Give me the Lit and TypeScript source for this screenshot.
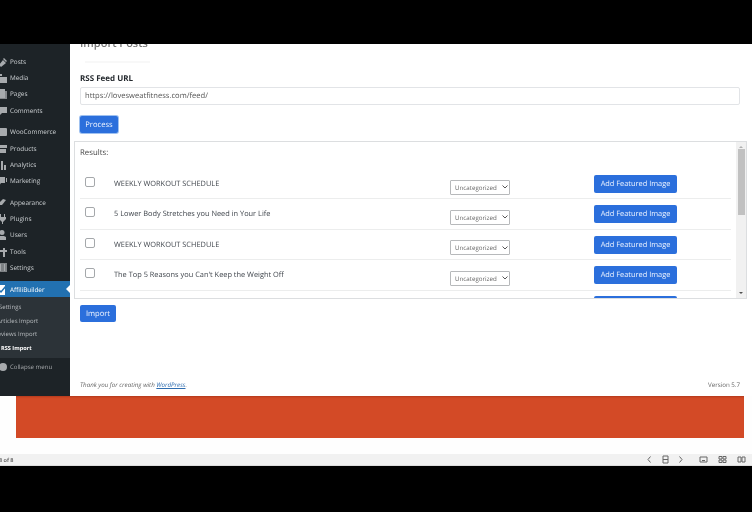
import { LitElement, html, css, svg } from "lit";
import { customElement } from "lit/decorators.js";

const icons: Record<string, unknown> = {
  posts: svg`<path d="M2 9l4-5 3 3-5 4zM6 3l3 3 1-1-3-3z"/>`,
  media: svg`<path d="M0 2h5v2H2v3H0zM3 5h7v6H3z"/>`,
  pages: svg`<path d="M1 1h7v9H1z"/><path d="M3 3h7v8H3z" opacity=".75"/>`,
  comments: svg`<path d="M1 2h9v6H5l-3 3V8H1z"/>`,
  woo: svg`<rect x="0" y="2" width="10" height="8" rx="1"/>`,
  products: svg`<path d="M0 2h10v3H0zM1 6h8v4H1z"/>`,
  analytics: svg`<path d="M1 5h2v6H1zM4 2h2v9H4zM7 6h2v5H7z"/>`,
  marketing: svg`<path d="M1 2h7v6H4l-2 3V8H1zM9 3h1v4H9z"/>`,
  appearance: svg`<path d="M1 7l5-5 3 1-4 5H2z"/>`,
  plugins: svg`<path d="M3 1h1v3H3zM7 1h1v3H7zM2 4h7v2L6 9v2H5V9L2 6z"/>`,
  users: svg`<circle cx="5" cy="3.5" r="2.500"/><path d="M1 11V8l2-1h4l2 1v3z"/>`,
  tools: svg`<path d="M1 4h5V2h2v2h2v2H8v5H6V6H1z"/>`,
  settings: svg`<path d="M1 1h9v9H1z" fill-opacity=".7"/><path d="M3 2h1v7H3zM7 2h1v7H7z"/>`,
  affili: svg`<path d="M0 1h8v10H0z"/><path d="M2 6l2 2 5-6" fill="none" stroke="#2271b1" stroke-width="1.5"/>`,
};

const menu = [
  [["Posts", "posts"], ["Media", "media"], ["Pages", "pages"], ["Comments", "comments"]],
  [["WooCommerce", "woo"], ["Products", "products"], ["Analytics", "analytics"], ["Marketing", "marketing"]],
  [["Appearance", "appearance"], ["Plugins", "plugins"], ["Users", "users"], ["Tools", "tools"], ["Settings", "settings"]],
];

const rows = [
  "WEEKLY WORKOUT SCHEDULE",
  "5 Lower Body Stretches you Need in Your Life",
  "WEEKLY WORKOUT SCHEDULE",
  "The Top 5 Reasons you Can't Keep the Weight Off",
  "",
];

@customElement("app-root")
export class AppRoot extends LitElement {
  static styles = css`
    :host { display: block; width: 752px; height: 512px; overflow: hidden; background: #000; font-family: "Open Sans", "Noto Sans", sans-serif; color: #333; text-rendering: geometricPrecision; filter: blur(.35px); }
    .band { height: 44px; background: #000; }
    .wp { display: flex; height: 352px; background: #fff; }
    .side { width: 70px; flex: none; background: #1d2327; color: #ccd0d3; font-size: 6.4px; overflow: hidden; padding-top: 9px; box-sizing: border-box; }
    .group { margin-bottom: 5.4px; }
    .item { height: 16.3px; display: flex; align-items: center; gap: 2px; margin-left: -3px; white-space: nowrap; }
    .item svg { width: 11px; height: 11px; fill: #a7aaad; flex: none; }
    .active { height: 16px; background: #2271b1; color: #fff; position: relative; margin-left: 0; padding-left: 0; }
    .active svg { fill: #fff; margin-left: -3px; }
    .active::after { content: ""; position: absolute; right: 0; top: 4px; border: 4px solid transparent; border-right-color: #fff; border-left-width: 0; }
    .sub { background: #2c3338; height: 61px; padding-top: 4px; box-sizing: border-box; color: #b8bcbf; overflow: hidden; font-size: 6px; }
    .sub div { height: 13.6px; line-height: 13.6px; white-space: nowrap; }
    .sub .cur { color: #fff; font-weight: 700; font-size: 5.6px; }
    .collapse { height: 17px; display: flex; align-items: center; gap: 3px; color: #a7aaad; white-space: nowrap; font-size: 6.100px; }
    .dot { width: 8px; height: 8px; background: #a7aaad; border-radius: 50%; margin-left: -1px; flex: none; }
    .main { flex: 1; min-width: 0; display: flex; flex-direction: column; position: relative; overflow: hidden; }
    .title { height: 17px; padding: 0 0 0 10px; font-size: 11px; font-weight: 600; color: #777; line-height: 0; }
    .rule { height: 2px; width: 65px; margin-left: 15px; background: #f8f8f8; }
    label { display: block; font-size: 8px; font-weight: 700; color: #23282d; margin: 10px 0 0 10px; line-height: 11px; }
    .input { margin: 3px 12px 0 10px; height: 18px; border: 1px solid #e2e4e7; border-radius: 2px; box-sizing: border-box; font-size: 7.6px; line-height: 16px; padding-left: 4px; color: #555; }
    .btn { background: #2b6fdc; color: #eef4ff; border-radius: 2px; font-size: 7.6px; display: flex; align-items: center; justify-content: center; box-sizing: border-box; }
    .process { width: 38px; height: 17px; margin: 11px 0 0 10px; box-shadow: 0 0 0 1px #9fc1f0; }
    .box { margin: 8px 5px 0 4px; height: 158px; border: 1px solid #dcdee0; display: flex; box-sizing: border-box; overflow: hidden; }
    .list { flex: 1; min-width: 0; padding: 0 0 0 5px; }
    .results { font-size: 7.8px; height: 27px; padding-top: 6px; box-sizing: border-box; line-height: 11px; color: #444; }
    .row { height: 30.4px; display: grid; grid-template-columns: 34px 336px 144px 1fr; border-bottom: 1px solid #eceded; box-sizing: border-box; position: relative; margin-right: 5px; font-size: 7.4px; color: #40464d; }
    .row:last-child { border: 0; }
    .row:last-child .add { margin-top: 5.4px; }
    .check { width: 8px; height: 8px; border: 1px solid #a5a8ab; border-radius: 2px; margin: 8px 0 0 5px; background: #fff; box-sizing: content-box; }
    .name { padding-top: 10px; line-height: 11px; white-space: nowrap; }
    .sel { width: 60px; height: 15px; margin-top: 10.5px; border: 1px solid #b7b9bb; border-radius: 1px; box-sizing: border-box; font-size: 6.2px; line-height: 13px; padding-left: 4px; color: #666; display: flex; align-items: center; gap: 5px; }
    .sel svg { width: 6px; height: 4px; fill: none; stroke: #555; }
    .add { width: 83px; height: 18px; margin-top: 6px; font-size: 7.4px; }
    .add span { display: block; }
    .bar { width: 10px; flex: none; background: #f1f1f1; display: flex; flex-direction: column; align-items: center; justify-content: space-between; padding: 4px 0; box-sizing: border-box; }
    .thumb { width: 7px; height: 66px; background: #c1c1c1; margin-top: 1px; }
    .spacer { flex: 1; }
    .up, .down { width: 0; height: 0; border: 2px solid transparent; }
    .up { border-bottom-color: #b0b0b0; border-top-width: 0; }
    .down { border-top-color: #505050; border-bottom-width: 0; }
    .import { width: 36px; height: 17px; margin: 6px 0 0 10px; }
    .foot { margin-top: auto; height: 16px; display: flex; justify-content: space-between; padding: 0 12px 0 10px; font-size: 6.2px; color: #666; line-height: 10px; }
    .foot i a { color: #2f6db0; text-decoration: underline; }
    .slide { height: 58px; background: #fefefe; padding: 0 8px 0 16px; }
    .orange { height: 42px; background: #d34a26; box-shadow: inset 0 2px 2px -1px #b23a1c; }
    .status { height: 12px; background: #f1f1f1; display: flex; align-items: center; font-size: 5.5px; font-weight: 600; color: #555; border-bottom: 1px solid #ddd; box-sizing: border-box; padding-right: 6px; }
    .status .pg { flex: 1; margin-left: -1px; }
    .tool { display: flex; align-items: center; }
    .tool svg { width: 9px; height: 9px; fill: none; stroke: #666; stroke-width: 1; margin-left: 7px; display: block; }
  `;

  private icon(k: string) {
    return html`<svg viewBox="0 0 11 11">${icons[k]}</svg>`;
  }

  render() {
    return html`
      <div class="band"></div>
      <div class="wp">
        <nav class="side">
          ${menu.map(g => html`<div class="group">${g.map(([t, k]) => html`<div class="item">${this.icon(k)}<span>${t}</span></div>`)}</div>`)}
          <div class="item active">${this.icon("affili")}<span>AffiliBuilder</span></div>
          <div class="sub">
            <div style="margin-left:-1px">Settings</div>
            <div style="margin-left:-3px">Articles Import</div>
            <div style="margin-left:-6px">Reviews Import</div>
            <div class="cur" style="margin-left:1px">RSS Import</div>
          </div>
          <div class="collapse"><span class="dot"></span><span>Collapse menu</span></div>
        </nav>
        <main class="main">
          <div class="title">Import Posts</div>
          <div class="rule"></div>
          <label>RSS Feed URL</label>
          <div class="input">https://lovesweatfitness.com/feed/</div>
          <div class="btn process">Process</div>
          <section class="box">
            <div class="list">
              <div class="results">Results:</div>
              ${rows.map(r => html`
                <div class="row">
                  <div>${r ? html`<div class="check"></div>` : ""}</div>
                  <div class="name">${r}</div>
                  <div>${r ? html`<div class="sel"><span>Uncategorized</span><svg viewBox="0 0 6 4"><path d="M.5.5L3 3 5.500.5"/></svg></div>` : ""}</div>
                  <div><div class="btn add"><span>Add Featured Image</span></div></div>
                </div>`)}
            </div>
            <div class="bar"><span class="up"></span><span class="thumb"></span><span class="spacer"></span><span class="down"></span></div>
          </section>
          <div class="btn import">Import</div>
          <footer class="foot"><i>Thank you for creating with <a>WordPress</a>.</i><span>Version 5.7</span></footer>
        </main>
      </div>
      <div class="slide"><div class="orange"></div></div>
      <div class="status">
        <span class="pg">8 of 8</span>
        <div class="tool">
          <svg viewBox="0 0 9 9"><path d="M5.500 1.500L3 4.500l2.500 3"/></svg>
          <svg viewBox="0 0 9 9"><path d="M2 1h5v7H2zM2 4.500h5"/></svg>
          <svg viewBox="0 0 9 9" style="margin-left:6px"><path d="M3.500 1.500L6 4.500l-2.500 3"/></svg>
          <svg viewBox="0 0 9 9" style="margin-left:14px"><path d="M1 2h7v5H1zM3 5.500h3"/></svg>
          <svg viewBox="0 0 9 9" style="margin-left:10px"><path d="M1 1.500h3v2.500H1zM5 1.500h3v2.500H5zM1 5h3v2.500H1zM5 5h3v2.500H5z"/></svg>
          <svg viewBox="0 0 9 9" style="margin-left:10px"><path d="M1 2h3v5H1zM5 2h3v5H5z"/></svg>
        </div>
      </div>
    `;
  }
}
